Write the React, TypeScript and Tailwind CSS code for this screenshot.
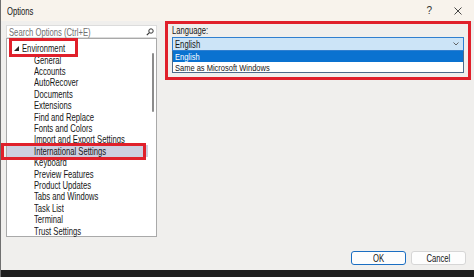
import React from "react";

const T = ({ children, wide = false }: { children: React.ReactNode; wide?: boolean }) => (
  <span className={`inline-block whitespace-nowrap origin-left ${wide ? "scale-x-[0.79]" : "scale-x-[0.73]"}`}>
    {children}
  </span>
);

const items = [
  "General",
  "Accounts",
  "AutoRecover",
  "Documents",
  "Extensions",
  "Find and Replace",
  "Fonts and Colors",
  "Import and Export Settings",
  "International Settings",
  "Keyboard",
  "Preview Features",
  "Product Updates",
  "Tabs and Windows",
  "Task List",
  "Terminal",
  "Trust Settings",
];

export default function App() {
  return (
    <div className="relative w-[474px] h-[277px] overflow-hidden flex flex-col bg-[#f0efed] border-l border-[#707070] font-['Liberation_Sans',Arial,sans-serif] text-[10.5px] leading-[10px] text-[#151515]">
      {/* title bar */}
      <div className="h-[21px] shrink-0 flex items-center bg-[#f8f3ec] pl-[6px]">
        <T>Options</T>
        <div className="ml-auto flex items-center">
          <span className="text-[10px] text-[#333] mr-[22px]">?</span>
          <svg width="8" height="8" viewBox="0 0 8 8" className="mr-[12px]">
            <path d="M0.5 0.5L7.5 7.5M7.5 0.5L0.5 7.5" stroke="#333" strokeWidth="0.9" />
          </svg>
        </div>
      </div>

      {/* body */}
      <div className="h-[216px] shrink-0 flex">
        <div className="w-[151px] ml-[5px] pt-[4px] flex flex-col">
          <div className="h-[13px] flex items-center bg-white border border-[#dcdcdc] pl-[2px] pr-[2px] text-[#707070]">
            <T>Search Options (Ctrl+E)</T>
            <svg width="8" height="8" viewBox="0 0 8 8" className="ml-auto">
              <circle cx="5" cy="3" r="2.2" fill="none" stroke="#333" strokeWidth="1" />
              <path d="M3.4 4.6L0.8 7.2" stroke="#333" strokeWidth="1.2" />
            </svg>
          </div>
          <div className="relative h-[199px] bg-white border border-[#a9a9a9] pt-[3.6px]">
            <div className="h-[11.4px] flex items-center pl-[7px]">
              <svg width="5" height="5" viewBox="0 0 5 5" className="mr-[3px]">
                <polygon points="5,0 5,5 0,5" fill="#262626" />
              </svg>
              <T>Environment</T>
            </div>
            {items.map((it) => (
              <div
                key={it}
                className={`h-[11.4px] flex items-center pl-[27px] mr-[8px] ${
                  it === "International Settings" ? "bg-[#cdcfe0]" : ""
                }`}
              >
                <T>{it}</T>
              </div>
            ))}
            <div className="absolute right-[2px] top-[14px] w-[2px] h-[59px] rounded-full bg-[#8c8c8c]" />
          </div>
        </div>

        <div className="flex-1 pl-[15px] pr-[10px] pt-[4px] flex flex-col">
          <div className="h-[10px] flex items-center">
            <T>Language:</T>
          </div>
          <div className="mt-[2px] h-[14px] flex items-center bg-[#cce4f7] border border-[#2f7fd0] pl-[2px] pr-[4px]">
            <T>English</T>
            <svg width="6" height="4" viewBox="0 0 6 4" className="ml-auto">
              <path d="M0.5 0.5L3 3L5.5 0.5" fill="none" stroke="#555" strokeWidth="0.9" />
            </svg>
          </div>
          <div className="flex flex-col bg-white border border-t-0 border-[#4d6a8a] text-[9.5px] leading-[9px]">
            <div className="h-[11px] flex items-center bg-[#0a72d0] text-white pl-[2px]">
              <T wide>English</T>
            </div>
            <div className="h-[10px] flex items-center pl-[2px]">
              <T wide>Same as Microsoft Windows</T>
            </div>
          </div>
        </div>
      </div>

      {/* footer */}
      <div className="h-[33px] shrink-0 flex justify-end items-start gap-[5px] pt-[14px] pr-[8px]">
        <button className="w-[55px] h-[14px] flex items-center justify-center rounded-[3px] bg-[#fdfdfd] border border-[#1b6ec2]">
          <span className="inline-block scale-x-[0.73]">OK</span>
        </button>
        <button className="w-[55px] h-[14px] flex items-center justify-center rounded-[3px] bg-[#fdfdfd] border border-[#d6d6d6]">
          <span className="inline-block scale-x-[0.73]">Cancel</span>
        </button>
      </div>
      <div className="h-[7px] shrink-0 bg-[#1f1f1f]" />

      {/* annotation boxes */}
      <div className="absolute left-[8px] top-[38px] w-[69px] h-[19px] border-[3px] border-[#e0202b]" />
      <div className="absolute left-0 top-[143px] w-[145px] h-[17px] border-[3px] border-[#e0202b]" />
      <div className="absolute left-[164px] top-[21px] w-[306px] h-[59px] border-[3px] border-[#e0202b]" />
    </div>
  );
}
